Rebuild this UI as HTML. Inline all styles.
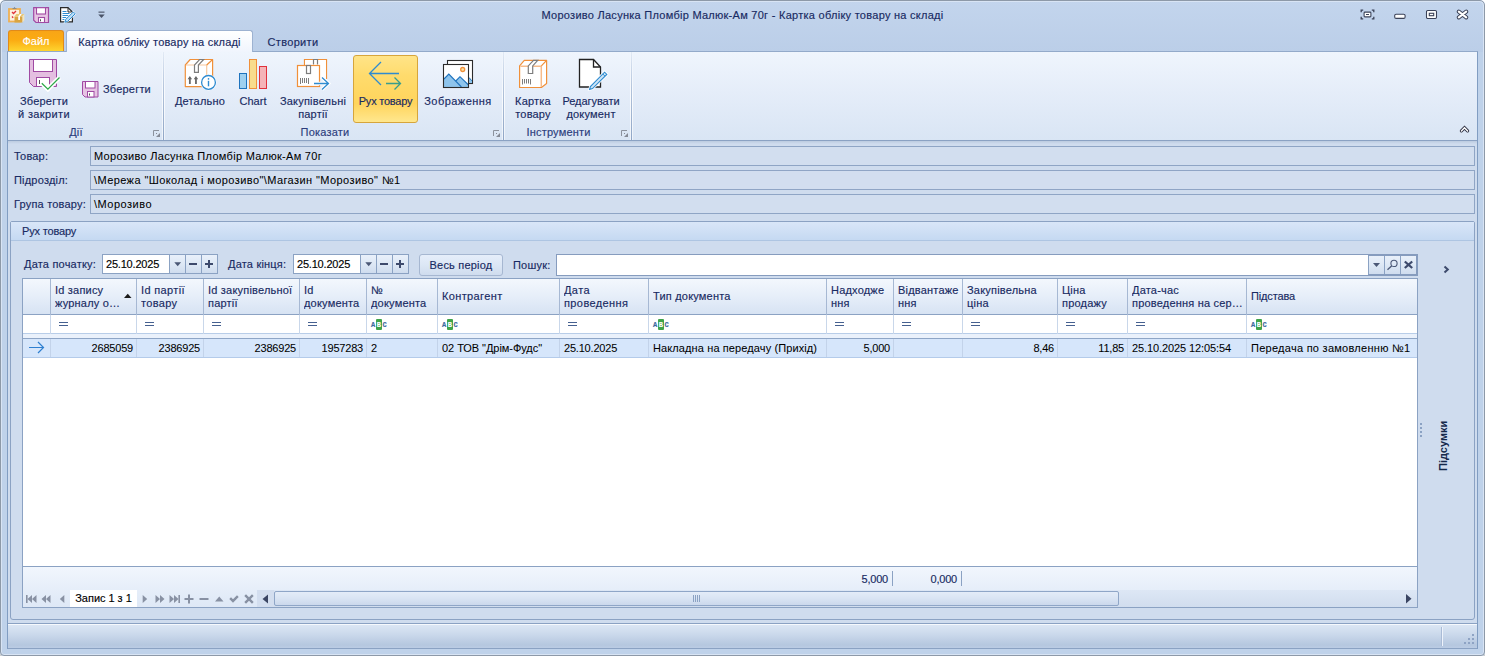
<!DOCTYPE html>
<html lang="uk">
<head>
<meta charset="utf-8">
<title>Картка обліку товару на складі</title>
<style>
*{box-sizing:border-box;margin:0;padding:0}
html,body{width:1485px;height:656px;overflow:hidden;background:#fff}
body{font-family:"Liberation Sans",sans-serif;font-size:11px;color:#182a62;letter-spacing:.2px;position:relative;-webkit-text-stroke:.15px}
.abs,#win *{position:absolute}
#win{position:absolute;left:0;top:0;width:1485px;height:656px;background:linear-gradient(#c3d5ed 0,#bbcee8 52px,#bfd2ea 52px);border-radius:5px 5px 4px 4px;overflow:hidden}
#frame{left:0;top:0;width:1485px;height:656px;border:1px solid #8d99a8;border-radius:5px 5px 4px 4px}
#frame2{left:1px;top:1px;width:1483px;height:654px;border:1px solid #d8e4f4;border-radius:4px 4px 3px 3px}
.t{white-space:nowrap;line-height:14px}
.c{text-align:center}
.r{text-align:right}
/* title */
#title{left:0;top:8px;width:1485px;text-align:center;color:#182a62;letter-spacing:.27px}
/* tabs */
#file{left:8px;top:30px;width:56px;height:21px;border-radius:3px 3px 0 0;background:linear-gradient(#f8a516,#fbab12 45%,#fed42f 100%);border:1px solid #e08a1a;border-bottom:none;color:#fff;text-align:center;line-height:20px;letter-spacing:0}
#tab1{left:66px;top:30px;width:187px;height:22px;border:1px solid #9db2d1;border-bottom:none;border-radius:3px 3px 0 0;background:linear-gradient(#ffffff,#f0f5fd);text-align:center;line-height:22px}
#tab2{left:267.500px;top:35px;letter-spacing:.33px}
/* ribbon */
#ribbon{left:7px;top:51px;width:1471px;height:90px;border:1px solid #8ba2c3;border-top-color:#93aaca;background:linear-gradient(#eff5fd,#e5edf9 45%,#d9e5f4)}
.gsep{top:52px;width:3px;height:88px;background:linear-gradient(rgba(255,255,255,.1),rgba(255,255,255,.8) 50%,rgba(255,255,255,.55)) 0 0/1px 100% no-repeat,linear-gradient(rgba(255,255,255,.1),rgba(255,255,255,.8) 50%,rgba(255,255,255,.55)) 2px 0/1px 100% no-repeat,linear-gradient(rgba(150,170,200,.15),#b0c1d9 45%,#8fa6c6) 1px 0/1px 100% no-repeat}
.glabel{top:125px;color:#2c3d7c}
.btxt{line-height:13px;text-align:center;white-space:nowrap}
#hot{border:1px solid #d6a53c;border-radius:3px;background:linear-gradient(#ffe488,#ffdb6c 30%,#ffd45c 72%,#ffe78e)}
/* body */
#body{left:8px;top:141px;width:1469px;height:482px;background:#cfdcee}
.lbl{left:14px}
.fld{left:90px;width:1385px;height:20px;border:1px solid #8fa5c5;background:#d2deef;color:#000;-webkit-text-stroke:.05px;padding-left:3px;line-height:18px;white-space:nowrap}
#grp{left:10px;top:221px;width:1465px;height:399px;border:1px solid #8ba2c3;background:#cfdcee;border-radius:2px 2px 3px 3px}
#grph{left:11px;top:222px;width:1463px;height:19px;background:linear-gradient(#d9e6f8,#c5d9f2);border-bottom:1px solid #aec5e2}
.edit{background:#fff;border:1px solid #8ba2c3}
.ebtn{width:16px;height:18px;border-left:1px solid #8ba2c3;background:linear-gradient(#e9f0fa,#dde8f5 50%,#cfdcee)}
.ebtn svg{left:0;top:0}
#allbtn{border:1px solid #a6b7d1;border-radius:3px;background:linear-gradient(#e6eefa,#dce7f5 50%,#cfdcee)}
#grid{left:22px;top:278px;width:1396px;height:330px;border:1px solid #8ba2c3;background:#fff}
#ghead{left:23px;top:279px;width:1394px;height:36px;background:linear-gradient(#f3f7fd,#e6eef9 50%,#d7e3f3);border-bottom:1px solid #8ba2c3}
#gfilt{left:23px;top:315px;width:1394px;height:19px;background:#fff;border-bottom:1px solid #b8cde8}
#gband{left:23px;top:334px;width:1394px;height:4px;background:#eaf1fb}
#grow{left:23px;top:338px;width:1394px;height:20px;background:#d6e6fb;border-top:1px solid #8ea5c6;border-bottom:1px solid #b4cbea}
#gfoot{left:23px;top:566px;width:1394px;height:41px;border-top:1px solid #8ba2c3;background:linear-gradient(#f1f6fd,#e6eef9 55%,#dee8f6)}
#gnav{left:257px;top:590px;width:1160px;height:17px;background:linear-gradient(#dde7f5,#d1ddee)}
.hsep{top:279px;width:1px;height:36px;background:#a6b8d3}
.fsep{top:315px;width:1px;height:19px;background:#c9d7ea}
.rsep{top:339px;width:1px;height:18px;background:#c3d3ea}
.hd{line-height:13px;white-space:nowrap;overflow:hidden}
.cell{color:#000;-webkit-text-stroke:.05px}
.num{letter-spacing:-.2px}
.abc{font-family:"Liberation Mono",monospace;font-size:7px;font-weight:bold;letter-spacing:0;height:11px;line-height:12px;white-space:nowrap;color:#3c6a9e;width:17px}
.abc span{display:block;top:0;height:11px;text-align:center}
.abc .a1{left:0;width:4px}
.abc .a2{left:4.500px;width:6.500px;background:#3fa34a;color:#fff;border-radius:1px}
.abc .a3{left:11.500px;width:4px}
.ftsep{top:571px;width:1px;height:15px;background:#8ba2c3}
#sbl{left:257px;top:590px;width:17px;height:17px;background:#d3deef}
#sbthumb{left:274px;top:591px;width:845px;height:15px;border:1px solid #8fa6c7;border-radius:2px;background:linear-gradient(#e4ecf8,#d9e4f3 50%,#cbd8ec)}
#sumlbl{left:1418px;top:439px;width:50px;font-weight:bold;color:#14284a;transform:rotate(-90deg);text-align:center;letter-spacing:0;-webkit-text-stroke:0}
#status{left:8px;top:623px;width:1469px;height:26px;border-top:1px solid #8ba2c3;border-bottom:1px solid #8ba2c3;background:linear-gradient(#f6f9fd 0,#f6f9fd 1px,#dbe6f4 1px,#cad8eb 45%,#b5c7df 88%,#bbcce4)}
.stsep{top:627px;width:2px;height:19px;background:linear-gradient(90deg,#a9bbd6 1px,#eef3fb 1px)}
.vline{top:52px;width:1px;height:597px;background:#819dc2}
#rshadow{left:8px;top:141px;width:1469px;height:3px;background:linear-gradient(#bccbe0,#cfdcee)}
</style>
</head>
<body>
<div class="abs" style="position:absolute;left:0;top:650px;width:6px;height:6px;background:#cfcfcf"></div>
<div class="abs" style="position:absolute;left:1479px;top:650px;width:6px;height:6px;background:#cfcfcf"></div>
<div id="win">
  <!-- title -->
  <div id="title" class="t">Морозиво Ласунка Пломбір Малюк-Ам 70г - Картка обліку товару на складі</div>


  <!-- quick access toolbar -->
  <svg style="left:8px;top:6px" width="17" height="18" viewBox="0 0 17 18">
    <rect x="1" y="3" width="11" height="12.500" fill="#fdf1e0" stroke="#eeb055" stroke-width="1.800"/>
    <path d="M4.500 3v-1h1.200l.8-1.200l.8 1.200h1.200v1z" fill="#8c8c8c"/>
    <path d="M4 6l1.500 1.500l2.500-2.500M4 10.500l1.200 1.300" fill="none" stroke="#e0323c" stroke-width="1.300"/>
    <rect x="6.500" y="10.500" width="8" height="6" fill="#d9a441"/>
    <path d="M6.500 10.500l1.800-2.500h8l-1.800 2.500z" fill="#e9c878"/><path d="M14.500 10.500l1.800-2.500v6l-1.800 2.500z" fill="#f6e6b8"/>
    <path d="M10.200 10.500l1.800-2.500h1.800l-1.800 2.500v3.500h-1.800z" fill="#fff"/>
  </svg>
  <svg style="left:33px;top:7px" width="17" height="17" viewBox="0 0 17 17">
    <path d="M.7.700h14.800v14.800h-12.500l-2.300-2.300z" fill="#e6c3e3" stroke="#a04aa3" stroke-width="1.200"/>
    <rect x="3.500" y=".7" width="9" height="6.300" fill="#fff" stroke="#a04aa3" stroke-width="1.100"/>
    <rect x="5.500" y="10.500" width="6" height="5" fill="#fff" stroke="#a04aa3" stroke-width="1.100"/>
    <rect x="7" y="12.300" width="1" height="2" fill="#555"/>
  </svg>
  <svg style="left:59px;top:6px" width="18" height="18" viewBox="0 0 18 18">
    <path d="M1.600 1.600h7.400l4.400 4.400v9.800h-11.800z" fill="#fff" stroke="#2a2a2a" stroke-width="1.200"/>
    <path d="M9 1.600v4.400h4.400" fill="none" stroke="#2a2a2a" stroke-width="1"/>
    <path d="M3.500 5.500h4M3.500 7.500h7M3.500 9.500h6M3.500 11.500h4M3.500 13.500h2" stroke="#2e8bd0" stroke-width="1"/>
    <path d="M5.800 16.300l.9-2.800l7.600-7.600l1.900 1.900l-7.600 7.600z" fill="#fff" stroke="#fff" stroke-width="1.600"/>
    <path d="M5.800 16.300l.9-2.800l7.600-7.600l1.900 1.900l-7.600 7.600z" fill="#bfe0f8" stroke="#2e8bd0" stroke-width="1"/>
  </svg>
  <svg style="left:97px;top:11px" width="9" height="8" viewBox="0 0 9 8"><rect x="1.500" y=".5" width="6" height="1.300" fill="#5a6478"/><path d="M1.300 3.500h6.400l-3.200 3.500z" fill="#4a5468"/></svg>

  <!-- window buttons -->
  <svg style="left:1360px;top:9px" width="15" height="11" viewBox="0 0 15 11">
    <path d="M1.200 3.200v-2h2M11.800 1.200h2v2M13.800 7.800v2h-2M3.200 9.800h-2v-2" fill="none" stroke="#3b4258" stroke-width="1.300"/>
    <rect x="4.100" y="3.100" width="6.800" height="4.800" rx=".8" fill="#fff" stroke="#3b4258" stroke-width="1.100"/>
    <rect x="6" y="5" width="3" height="1" fill="#3b4258"/>
  </svg>
  <svg style="left:1394px;top:13px" width="12" height="7" viewBox="0 0 12 7"><rect x=".7" y="1.200" width="10.400" height="4.200" rx="1.400" fill="#fff" stroke="#3b4258" stroke-width="1.100"/></svg>
  <svg style="left:1425px;top:9px" width="13" height="11" viewBox="0 0 13 11"><rect x="1.500" y="1.500" width="10" height="8" rx="1.200" fill="#fff" stroke="#3b4258" stroke-width="1.100"/><rect x="4.300" y="4.300" width="4.400" height="2.400" fill="#fff" stroke="#3b4258" stroke-width="1.100"/></svg>
  <svg style="left:1456px;top:9px" width="13" height="11" viewBox="0 0 13 11"><path d="M2.800 2.600l7.400 5.800M10.200 2.600l-7.400 5.800" stroke="#3b4258" stroke-width="4" stroke-linecap="round"/><path d="M2.800 2.600l7.400 5.800M10.200 2.600l-7.400 5.800" stroke="#fff" stroke-width="2.100" stroke-linecap="round"/></svg>

  <!-- tabs -->

  <!-- ribbon -->
  <div id="ribbon"></div>
  <div id="file">Файл</div>
  <div id="tab1">Картка обліку товару на складі</div>
  <div id="tab2" class="t">Створити</div>
  <div class="gsep" style="left:162px"></div>
  <div class="gsep" style="left:502px"></div>
  <div class="gsep" style="left:630px"></div>


  <!-- ribbon group: Дії -->
  <svg style="left:28px;top:58px" width="34" height="34" viewBox="0 0 34 34">
    <path d="M1.5 1.5h27v27h-23l-4-4z" fill="#e4bfe0" stroke="#a04aa3" stroke-width="1"/>
    <rect x="5.5" y="1.5" width="19" height="12" fill="#fff" stroke="#a04aa3"/>
    <rect x="8.500" y="19.5" width="13" height="9" fill="#fff" stroke="#a04aa3"/>
    <rect x="11" y="22" width="1" height="4" fill="#555"/>
    <path d="M13.800 25.300l6.100 5.800l11.600-11.600" fill="none" stroke="#fff" stroke-width="4.500"/>
    <path d="M13.800 25.300l6.100 5.800l11.600-11.600" fill="none" stroke="#2ea84a" stroke-width="1.300"/>
  </svg>
  <div class="btxt" style="left:10px;top:95px;width:68px">Зберегти<br><span style="position:static;letter-spacing:.4px">й закрити</span></div>
  <svg style="left:82px;top:81px" width="17" height="17" viewBox="0 0 17 17">
    <path d="M.5.500h15.500v15.500h-13l-2.500-2.500z" fill="#e6c3e3" stroke="#a04aa3"/>
    <rect x="3.500" y=".5" width="9.500" height="6.500" fill="#fff" stroke="#a04aa3"/>
    <rect x="5.500" y="10.500" width="6.500" height="5.500" fill="#fff" stroke="#a04aa3"/>
    <rect x="7" y="12.500" width="1" height="2" fill="#555"/>
  </svg>
  <div class="t" style="left:103px;top:82px">Зберегти</div>
  <div class="t glabel c" style="left:8px;top:125px;width:136px">Дії</div>
  <svg class="lnch" style="left:153px;top:130px" width="8" height="8" viewBox="0 0 8 8"><path d="M.5 6v-5.500h5.500" fill="none" stroke="#8c929d"/><path d="M7 3v4h-4z" fill="#858a95"/><rect x="3" y="3" width="1" height="1" fill="#858a95"/></svg>

  <!-- ribbon group: Показати -->
  <!-- Детально -->
  <svg style="left:183px;top:57px" width="36" height="36" viewBox="0 0 36 36">
    <path d="M2.300 8l4.900-5.500h22.400v21.600l-5.900 5.500h-21.400z" fill="#fff" stroke="#f0903a" stroke-width="1.200" stroke-linejoin="round"/>
    <path d="M2.900 8h20.800v21" fill="none" stroke="#f8c89e" stroke-width="1.200"/>
    <path d="M23.700 8l5.900-5.500" fill="none" stroke="#f0903a" stroke-width="1.200"/>
    <path d="M16.600 2.500h4l-5.200 5.500v7.300h-3.900v-7.300z" fill="#fff" stroke="#7d7d7d" stroke-width="1.200"/>
    <path d="M6.850 27v-5.500M12.950 27v-5.500" stroke="#666" stroke-width="1.800"/>
    <path d="M4.600 22.300l2.250-3.300l2.250 3.300zM10.700 22.300l2.250-3.300l2.250 3.300z" fill="#666"/>
    <circle cx="25.500" cy="25.400" r="8" fill="#fff"/>
    <circle cx="25.500" cy="25.400" r="6.900" fill="#fff" stroke="#2e8bd0" stroke-width="1.300"/>
    <rect x="24.800" y="23.800" width="1.400" height="5.500" fill="#2e8bd0"/><rect x="24.800" y="21.100" width="1.400" height="1.600" fill="#2e8bd0"/>
  </svg>
  <div class="btxt" style="left:165px;top:95px;width:70px">Детально</div>
  <!-- Chart -->
  <svg style="left:238px;top:58px" width="30" height="32" viewBox="0 0 30 32">
    <rect x="1.500" y="15.500" width="7" height="15" fill="#9fd0f0" stroke="#1e73be"/>
    <rect x="11.500" y="1.500" width="7" height="29" fill="#f8dc8c" stroke="#f0903a"/>
    <rect x="21.500" y="8.500" width="7" height="22" fill="#f5b4b8" stroke="#e0323c"/>
  </svg>
  <div class="btxt" style="left:233px;top:95px;width:40px;letter-spacing:0">Chart</div>
  <!-- Закупівельні партії -->
  <svg style="left:296px;top:58px" width="36" height="34" viewBox="0 0 36 34">
    <path d="M8.500 7v-5.500h22v19.500" fill="#fff" stroke="#f0903a" stroke-width="1.200"/>
    <rect x="9.100" y="2.100" width="20.800" height="19" fill="#fff"/>
    <path d="M17.500 6.500v-5h4v5" fill="none" stroke="#7d7d7d" stroke-width="1.200"/>
    <rect x="1.500" y="7.500" width="22" height="21" fill="#fff" stroke="#f0903a" stroke-width="1.200"/>
    <rect x="10.500" y="7.500" width="4" height="8" fill="#fff" stroke="#7d7d7d" stroke-width="1.200"/>
    <path d="M4.500 20v6M6.500 20v5M8.500 20v5M10.500 20v5M12.500 20v6" stroke="#7d7d7d" stroke-width="1"/>
    <path d="M17 25.500h15M26 19.500l6.500 6l-6.500 6" fill="none" stroke="#fff" stroke-width="3.500"/>
    <path d="M18 25.500h14M26 19.500l6.500 6l-6.500 6" fill="none" stroke="#2e8bd0" stroke-width="1.300"/>
  </svg>
  <div class="btxt" style="left:273px;top:95px;width:80px">Закупівельні<br>партії</div>
  <!-- Рух товару (checked) -->
  <div id="hot" style="left:353px;top:55px;width:65px;height:68px"></div>
  <svg style="left:366px;top:58px" width="38" height="34" viewBox="0 0 38 34">
    <path d="M33 15.500h-29M15 4l-11.500 11.500l11.500 11.500" fill="none" stroke="#2e8bd0" stroke-width="1.300"/>
    <path d="M20 25.500h14.500M28.500 19.500l6 6l-6 6" fill="none" stroke="#3a9d8c" stroke-width="1.300"/>
  </svg>
  <div class="btxt" style="left:353px;top:95px;width:65px;letter-spacing:-.23px">Рух товару</div>
  <!-- Зображення -->
  <svg style="left:442px;top:58px" width="34" height="32" viewBox="0 0 34 32">
    <rect x="5.500" y="2.500" width="25" height="23" fill="#fff" stroke="#2b2b2b" stroke-width="1.100"/>
    <path d="M27 19.500l3 3.500v2h-3z" fill="#8ec4ec"/><path d="M27 19.500l2.800 3.300" stroke="#1e73be" stroke-width="1" fill="none"/>
    <rect x="1" y="6" width="26" height="24" fill="#fff"/>
    <path d="M2 21l4.800-5l12.700 13h-17.500z" fill="#8ec4ec"/>
    <path d="M13.500 23l4.500-4.500l8.500 8.500v2h-6.500z" fill="#8ec4ec"/>
    <path d="M2 21l4.800-5l12.700 13M13.800 23l4.200-4.300l8.500 8.300" fill="none" stroke="#1e73be" stroke-width="1.100"/>
    <circle cx="20.700" cy="11.500" r="2" fill="#fbe4a4" stroke="#f0903a" stroke-width="1.300"/>
    <rect x="1.500" y="6.500" width="25" height="23" fill="none" stroke="#2b2b2b" stroke-width="1.100"/>
  </svg>
  <div class="btxt" style="left:420px;top:95px;width:76px;letter-spacing:.47px">Зображення</div>
  <div class="t glabel c" style="left:165px;top:125px;width:320px">Показати</div>
  <svg class="lnch" style="left:493px;top:130px" width="8" height="8" viewBox="0 0 8 8"><path d="M.5 6v-5.500h5.500" fill="none" stroke="#8c929d"/><path d="M7 3v4h-4z" fill="#858a95"/><rect x="3" y="3" width="1" height="1" fill="#858a95"/></svg>

  <!-- ribbon group: Інструменти -->
  <svg style="left:517px;top:58px" width="34" height="34" viewBox="0 0 34 34">
    <path d="M2.600 7.900l4.700-5.500h22.300v23.200l-5.200 3.900h-21.800z" fill="#fff" stroke="#f0903a" stroke-width="1.200" stroke-linejoin="round"/>
    <path d="M3.400 8.300h20.900v20.600" fill="none" stroke="#f6bb8b" stroke-width="1.500"/>
    <path d="M24.400 7.900l5.200-5.500" fill="none" stroke="#f0903a" stroke-width="1.200"/>
    <path d="M16.500 2.400h4.200l-5 5.500v7.600h-4.400v-7.600z" fill="#fff" stroke="#7d7d7d" stroke-width="1.200"/>
    <path d="M5.500 21v5.500M7.500 21v4.500M9.500 21v4.500M11.500 21v4.500M13.500 21v5.500" stroke="#7d7d7d" stroke-width="1"/>
  </svg>
  <div class="btxt" style="left:505px;top:95px;width:56px">Картка<br>товару</div>
  <svg style="left:577px;top:58px" width="33" height="34" viewBox="0 0 33 34">
    <path d="M2.500 1.500h14l7 7.500v20h-21z" fill="#fff" stroke="#222" stroke-width="1.300"/>
    <path d="M16.500 1.500v7.500h7" fill="none" stroke="#222" stroke-width="1.300"/>
    <path d="M12.600 31.400l.8-2.900l14.200-14.300l2.200 2.200l-14.300 14.200z" fill="#fff" stroke="#fff" stroke-width="2.600"/>
    <path d="M12.600 31.400l.8-2.900l14.200-14.300l2.200 2.200l-14.300 14.200z" fill="#cfe6f8" stroke="#2e8bd0" stroke-width="1.100"/>
    <path d="M25.800 16l2.200 2.200" stroke="#2e8bd0" stroke-width="1"/>
  </svg>
  <div class="btxt" style="left:555px;top:95px;width:72px"><span style="position:static;letter-spacing:-.05px">Редагувати</span><br>документ</div>
  <div class="t glabel c" style="left:505px;top:125px;width:107px">Інструменти</div>
  <svg class="lnch" style="left:621px;top:130px" width="8" height="8" viewBox="0 0 8 8"><path d="M.5 6v-5.500h5.500" fill="none" stroke="#8c929d"/><path d="M7 3v4h-4z" fill="#858a95"/><rect x="3" y="3" width="1" height="1" fill="#858a95"/></svg>
  <!-- collapse chevron -->
  <svg style="left:1459px;top:125px" width="11" height="9" viewBox="0 0 11 9"><path d="M2.400 5.900l3.100-3.100l3.100 3.100" fill="none" stroke="#2b2d3f" stroke-width="3.200" stroke-linecap="round" stroke-linejoin="miter"/><path d="M2.400 5.900l3.100-3.100l3.100 3.100" fill="none" stroke="#fff" stroke-width="1.400" stroke-linecap="round"/></svg>

  <!-- body -->
  <div id="body"></div>
  <div id="rshadow"></div>


  <div class="t lbl" style="top:149px">Товар:</div>
  <div class="fld" style="top:146px;letter-spacing:.3px">Морозиво Ласунка Пломбір Малюк-Ам 70г</div>
  <div class="t lbl" style="top:173px">Підрозділ:</div>
  <div class="fld" style="top:170px;letter-spacing:.41px">\Мережа "Шоколад і морозиво"\Магазин "Морозиво" №1</div>
  <div class="t lbl" style="top:197px">Група товару:</div>
  <div class="fld" style="top:194px;letter-spacing:.5px">\Морозиво</div>

  <!-- group panel -->
  <div id="grp"></div>
  <div id="grph"></div>
  <div class="t" style="left:22px;top:224px;letter-spacing:-.16px">Рух товару</div>

  <!-- toolbar -->
  <div class="t" style="left:24px;top:257px">Дата початку:</div>
  <div class="edit" style="left:102px;top:254px;width:116px;height:20px"></div>
  <div class="t num" style="left:106px;top:257px;color:#000">25.10.2025</div>
  <div class="ebtn" style="left:169px;top:255px"><svg width="16" height="18"><path d="M4.300 7.300h6.800l-3.400 4z" fill="#4b5876"/></svg></div>
  <div class="ebtn" style="left:185px;top:255px"><svg width="16" height="18"><rect x="3" y="8" width="8" height="2" fill="#3d4a6c"/></svg></div>
  <div class="ebtn" style="left:201px;top:255px"><svg width="16" height="18"><rect x="3" y="8" width="8" height="2" fill="#3d4a6c"/><rect x="6" y="5" width="2" height="8" fill="#3d4a6c"/></svg></div>

  <div class="t" style="left:228px;top:257px">Дата кінця:</div>
  <div class="edit" style="left:293px;top:254px;width:116px;height:20px"></div>
  <div class="t num" style="left:297px;top:257px;color:#000">25.10.2025</div>
  <div class="ebtn" style="left:360px;top:255px"><svg width="16" height="18"><path d="M4.300 7.300h6.800l-3.400 4z" fill="#4b5876"/></svg></div>
  <div class="ebtn" style="left:376px;top:255px"><svg width="16" height="18"><rect x="3" y="8" width="8" height="2" fill="#3d4a6c"/></svg></div>
  <div class="ebtn" style="left:392px;top:255px"><svg width="16" height="18"><rect x="3" y="8" width="8" height="2" fill="#3d4a6c"/><rect x="6" y="5" width="2" height="8" fill="#3d4a6c"/></svg></div>

  <div id="allbtn" class="c" style="left:419px;top:254px;width:84px;height:22px;line-height:20px">Весь період</div>
  <div class="t" style="left:513px;top:258px">Пошук:</div>
  <div class="edit" style="left:556px;top:254px;width:862px;height:22px;border:1px solid #869cbe"></div>
  <div style="left:1368px;top:255px;width:49px;height:20px;border:1px solid #869cbe"></div>
  <div class="ebtn" style="left:1368px;top:256px"><svg width="16" height="18"><path d="M4 7h7l-3.500 4z" fill="#4b5876"/></svg></div>
  <div class="ebtn" style="left:1384px;top:256px"><svg width="16" height="18"><circle cx="9" cy="7.400" r="3.100" fill="none" stroke="#4b5876" stroke-width="1.100"/><path d="M6.800 9.800l-4.300 4" stroke="#4b5876" stroke-width="1.300"/></svg></div>
  <div class="ebtn" style="left:1400px;top:256px"><svg width="16" height="18"><path d="M3.800 5.500l7.400 6.500M11.200 5.500l-7.400 6.500" stroke="#3d4a6c" stroke-width="2.300"/></svg></div>
  <svg style="left:1442px;top:265px" width="9" height="10"><path d="M2.500 1.500l3.300 3l-3.300 3" fill="none" stroke="#3d4a6c" stroke-width="2"/></svg>

<!--GRID-START-->
  <div id="grid"></div>
  <div id="ghead"></div>
  <div id="gfilt"></div>
  <div id="gband"></div>
  <div id="grow"></div>
  <div id="gfoot"></div>
  <div id="gnav"></div>
  <div class="hsep" style="left:50px"></div>
  <div class="fsep" style="left:50px"></div>
  <div class="rsep" style="left:50px"></div>
  <div class="hd" style="left:55px;top:284px;width:80px">Id запису<br>журналу о…</div>
  <svg style="left:59px;top:321px" width="10" height="6"><rect x="0" y="1" width="9" height="1" fill="#45608f"/><rect x="0" y="4" width="9" height="1" fill="#45608f"/></svg>
  <div class="t r cell num" style="left:50px;top:341px;width:83px">2685059</div>
  <div class="hsep" style="left:136px"></div>
  <div class="fsep" style="left:136px"></div>
  <div class="rsep" style="left:136px"></div>
  <div class="hd" style="left:141px;top:284px;width:61px;letter-spacing:.35px">Id партії<br>товару</div>
  <svg style="left:145px;top:321px" width="10" height="6"><rect x="0" y="1" width="9" height="1" fill="#45608f"/><rect x="0" y="4" width="9" height="1" fill="#45608f"/></svg>
  <div class="t r cell num" style="left:136px;top:341px;width:64px">2386925</div>
  <div class="hsep" style="left:203px"></div>
  <div class="fsep" style="left:203px"></div>
  <div class="rsep" style="left:203px"></div>
  <div class="hd" style="left:208px;top:284px;width:90px">Id закупівельної<br>партії</div>
  <svg style="left:212px;top:321px" width="10" height="6"><rect x="0" y="1" width="9" height="1" fill="#45608f"/><rect x="0" y="4" width="9" height="1" fill="#45608f"/></svg>
  <div class="t r cell num" style="left:203px;top:341px;width:93px">2386925</div>
  <div class="hsep" style="left:299px"></div>
  <div class="fsep" style="left:299px"></div>
  <div class="rsep" style="left:299px"></div>
  <div class="hd" style="left:304px;top:284px;width:61px">Id<br>документа</div>
  <svg style="left:308px;top:321px" width="10" height="6"><rect x="0" y="1" width="9" height="1" fill="#45608f"/><rect x="0" y="4" width="9" height="1" fill="#45608f"/></svg>
  <div class="t r cell num" style="left:299px;top:341px;width:64px">1957283</div>
  <div class="hsep" style="left:366px"></div>
  <div class="fsep" style="left:366px"></div>
  <div class="rsep" style="left:366px"></div>
  <div class="hd" style="left:371px;top:284px;width:65px">№<br>документа</div>
  <div class="abc" style="left:371px;top:319px"><span class="a1">A</span><span class="a2">B</span><span class="a3">C</span></div>
  <div class="t cell num" style="left:371px;top:341px">2</div>
  <div class="hsep" style="left:437px"></div>
  <div class="fsep" style="left:437px"></div>
  <div class="rsep" style="left:437px"></div>
  <div class="hd" style="left:442px;top:290px;width:116px;letter-spacing:.37px">Контрагент</div>
  <div class="abc" style="left:442px;top:319px"><span class="a1">A</span><span class="a2">B</span><span class="a3">C</span></div>
  <div class="t cell" style="left:442px;top:341px;letter-spacing:-.05px">02 ТОВ "Дрім-Фудс"</div>
  <div class="hsep" style="left:559px"></div>
  <div class="fsep" style="left:559px"></div>
  <div class="rsep" style="left:559px"></div>
  <div class="hd" style="left:564px;top:284px;width:83px;letter-spacing:.4px">Дата<br>проведення</div>
  <svg style="left:568px;top:321px" width="10" height="6"><rect x="0" y="1" width="9" height="1" fill="#45608f"/><rect x="0" y="4" width="9" height="1" fill="#45608f"/></svg>
  <div class="t cell num" style="left:564px;top:341px">25.10.2025</div>
  <div class="hsep" style="left:648px"></div>
  <div class="fsep" style="left:648px"></div>
  <div class="rsep" style="left:648px"></div>
  <div class="hd" style="left:653px;top:290px;width:172px">Тип документа</div>
  <div class="abc" style="left:653px;top:319px"><span class="a1">A</span><span class="a2">B</span><span class="a3">C</span></div>
  <div class="t cell" style="left:653px;top:341px;letter-spacing:.11px">Накладна на передачу (Прихід)</div>
  <div class="hsep" style="left:826px"></div>
  <div class="fsep" style="left:826px"></div>
  <div class="rsep" style="left:826px"></div>
  <div class="hd" style="left:831px;top:284px;width:61px">Надходже<br>ння</div>
  <svg style="left:835px;top:321px" width="10" height="6"><rect x="0" y="1" width="9" height="1" fill="#45608f"/><rect x="0" y="4" width="9" height="1" fill="#45608f"/></svg>
  <div class="t r cell num" style="left:826px;top:341px;width:64px">5,000</div>
  <div class="hsep" style="left:893px"></div>
  <div class="fsep" style="left:893px"></div>
  <div class="rsep" style="left:893px"></div>
  <div class="hd" style="left:898px;top:284px;width:63px">Відвантаже<br>ння</div>
  <svg style="left:902px;top:321px" width="10" height="6"><rect x="0" y="1" width="9" height="1" fill="#45608f"/><rect x="0" y="4" width="9" height="1" fill="#45608f"/></svg>
  <div class="hsep" style="left:962px"></div>
  <div class="fsep" style="left:962px"></div>
  <div class="rsep" style="left:962px"></div>
  <div class="hd" style="left:967px;top:284px;width:89px">Закупівельна<br>ціна</div>
  <svg style="left:971px;top:321px" width="10" height="6"><rect x="0" y="1" width="9" height="1" fill="#45608f"/><rect x="0" y="4" width="9" height="1" fill="#45608f"/></svg>
  <div class="t r cell num" style="left:962px;top:341px;width:92px">8,46</div>
  <div class="hsep" style="left:1057px"></div>
  <div class="fsep" style="left:1057px"></div>
  <div class="rsep" style="left:1057px"></div>
  <div class="hd" style="left:1062px;top:284px;width:64px">Ціна<br>продажу</div>
  <svg style="left:1066px;top:321px" width="10" height="6"><rect x="0" y="1" width="9" height="1" fill="#45608f"/><rect x="0" y="4" width="9" height="1" fill="#45608f"/></svg>
  <div class="t r cell num" style="left:1057px;top:341px;width:67px">11,85</div>
  <div class="hsep" style="left:1127px"></div>
  <div class="fsep" style="left:1127px"></div>
  <div class="rsep" style="left:1127px"></div>
  <div class="hd" style="left:1132px;top:284px;width:113px">Дата-час<br>проведення на сер…</div>
  <svg style="left:1136px;top:321px" width="10" height="6"><rect x="0" y="1" width="9" height="1" fill="#45608f"/><rect x="0" y="4" width="9" height="1" fill="#45608f"/></svg>
  <div class="t cell num" style="left:1132px;top:341px;letter-spacing:-.1px">25.10.2025 12:05:54</div>
  <div class="hsep" style="left:1246px"></div>
  <div class="fsep" style="left:1246px"></div>
  <div class="rsep" style="left:1246px"></div>
  <div class="hd" style="left:1251px;top:290px;width:165px;letter-spacing:-.15px">Підстава</div>
  <div class="abc" style="left:1251px;top:319px"><span class="a1">A</span><span class="a2">B</span><span class="a3">C</span></div>
  <div class="t cell" style="left:1251px;top:341px;letter-spacing:.27px">Передача по замовленню №1</div>
  <svg style="left:124px;top:293px" width="8" height="6"><path d="M0 5h7.500l-3.750-4.200z" fill="#1b1b1b"/></svg>
  <svg style="left:27px;top:340px" width="19" height="15"><path d="M2 7.500h15M11 2l5.500 5.500l-5.500 5.500" fill="none" stroke="#2e7fd0" stroke-width="1.200"/></svg>
  <div class="t r num" style="left:826px;top:572px;width:62px">5,000</div>
  <div class="t r num" style="left:893px;top:572px;width:64px">0,000</div>
  <div class="ftsep" style="left:892px"></div>
  <div class="ftsep" style="left:961px"></div>
  <svg style="left:24px;top:591px" width="240" height="16" viewBox="0 0 240 16">
    <g fill="#8891a3">
      <rect x="2" y="4" width="1.600" height="8"/><path d="M8 4v8l-4.500-4zM12.500 4v8l-4.500-4z"/>
      <path d="M22 4v8l-4.500-4zM26.500 4v8l-4.500-4z"/>
      <path d="M40.300 4v8l-4.500-4z"/>
      <path d="M118.700 4v8l4.500-4z"/>
      <path d="M131.500 4v8l4.500-4zM136 4v8l4.500-4z"/>
      <path d="M145.500 4v8l4.500-4zM150 4v8l4.500-4z"/><rect x="154.400" y="4" width="1.600" height="8"/>
      <rect x="160.500" y="7" width="9" height="2"/><rect x="164" y="3.500" width="2" height="9"/>
      <rect x="175.500" y="7" width="9" height="2"/>
      <path d="M191 10.500h8.500l-4.250-5z"/>
      <path d="M205.300 8l1.700-1.700l2 2l4-4l1.700 1.700l-5.700 5.700z"/>
      <path d="M220.300 5l1.700-1.700l3 3l3-3l1.700 1.700l-3 3l3 3l-1.700 1.700l-3-3l-3 3l-1.700-1.700l3-3z"/>
    </g>
  </svg>
  <div class="t" style="left:70px;top:590px;width:67px;height:17px;background:#fff;text-align:center;line-height:17px;color:#000;letter-spacing:-.03px">Запис 1 з 1</div>
  <div id="sbl"></div>
  <svg style="left:257px;top:590px" width="17" height="17"><path d="M11 4.500v9l-5.500-4.500z" fill="#3a4563"/></svg>
  <div id="sbthumb"></div>
  <svg style="left:693px;top:594px" width="9" height="9"><path d="M.5 1v7M2.500 1v7M4.500 1v7M6.500 1v7" stroke="#8ba2c3" stroke-width="1"/></svg>
  <svg style="left:1400px;top:590px" width="17" height="17"><path d="M6 4v9.500l5.500-4.750z" fill="#3a4563"/></svg>

  <svg style="left:1419px;top:422px" width="4" height="16"><g fill="#8ba2c3"><rect x="1" y="1" width="2" height="2"/><rect x="1" y="5" width="2" height="2"/><rect x="1" y="9" width="2" height="2"/><rect x="1" y="13" width="2" height="2"/></g></svg>
  <div id="sumlbl" class="t">Підсумки</div>

  <div id="status"></div>
  <div class="stsep" style="left:1441px"></div>
  <svg style="left:1463px;top:633px" width="13" height="13"><g fill="#8ea3c4"><rect x="9" y="1" width="2" height="2"/><rect x="5" y="5" width="2" height="2"/><rect x="9" y="5" width="2" height="2"/><rect x="1" y="9" width="2" height="2"/><rect x="5" y="9" width="2" height="2"/><rect x="9" y="9" width="2" height="2"/></g></svg>

<!--GRID-END-->

  <div class="vline" style="left:7px"></div>
  <div class="vline" style="left:1477px"></div>
  <div id="frame2"></div>
  <div id="frame"></div>
</div>
</body>
</html>
